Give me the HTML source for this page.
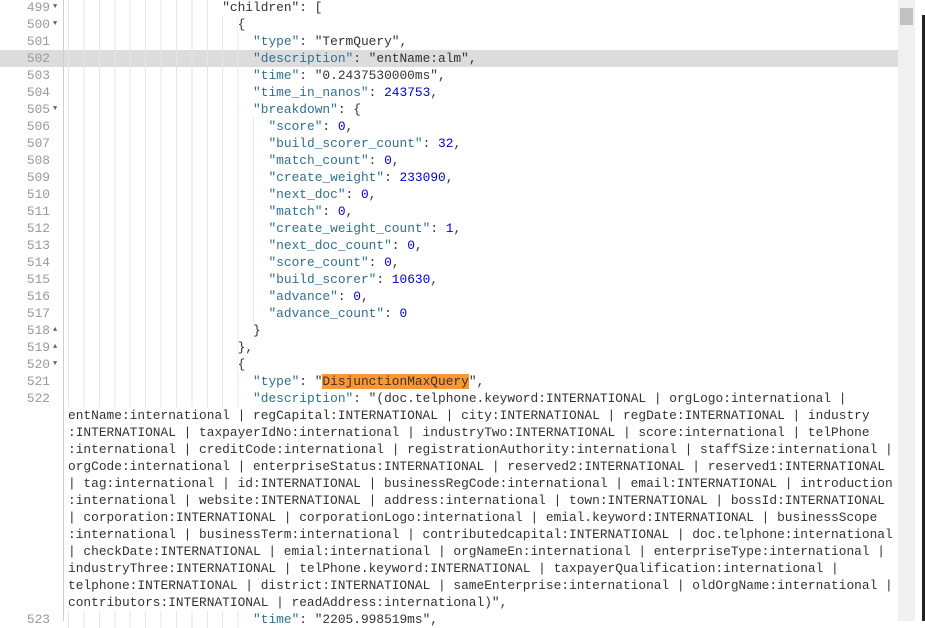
<!DOCTYPE html>
<html><head><meta charset="utf-8"><style>
body{margin:0;width:925px;height:621px;overflow:hidden;background:#fff;position:relative;font-family:"Liberation Mono",monospace;font-size:12.85px}
.r{position:absolute;left:68px;height:17px;line-height:17px;white-space:pre;color:#333}
.g{position:absolute;left:0;width:63px;height:17px;line-height:17px;color:#999;font-size:12.85px}
.g span{position:absolute;right:13px}
.g i{position:absolute;left:53px;top:0;font-style:normal;font-size:7px;color:#666}
.gd{position:absolute;left:68px;height:17px;background-image:repeating-linear-gradient(to right,#e6e6e6 0 1px,transparent 1px 15.42px)}
.k{color:#31708f}.n{color:#0000cd}
.hl{position:absolute;left:0;top:50px;width:898px;height:17px;background:#dcdcdd}
</style></head><body>
<div class="hl"></div>
<div style="position:absolute;left:63px;top:0;width:1px;height:621px;background:#d0d0d0"></div>
<div style="position:absolute;left:898px;top:0;width:17px;height:621px;background:#f0f0f0"></div>
<div style="position:absolute;left:900px;top:8px;width:13px;height:17px;background:#c1c1c1"></div>
<div style="position:absolute;left:922px;top:15px;width:3px;height:606px;background:#222"></div>
<div id="c"></div>
<script>
var L=[
[499,20,'"children": [','d'],
[500,22,'{','d'],
[501,24,'<k>"type"</k>: "TermQuery",'],
[502,24,'<k>"description"</k>: "entName:alm",'],
[503,24,'<k>"time"</k>: "0.2437530000ms",'],
[504,24,'<k>"time_in_nanos"</k>: <n>243753</n>,'],
[505,24,'<k>"breakdown"</k>: {','d'],
[506,26,'<k>"score"</k>: <n>0</n>,'],
[507,26,'<k>"build_scorer_count"</k>: <n>32</n>,'],
[508,26,'<k>"match_count"</k>: <n>0</n>,'],
[509,26,'<k>"create_weight"</k>: <n>233090</n>,'],
[510,26,'<k>"next_doc"</k>: <n>0</n>,'],
[511,26,'<k>"match"</k>: <n>0</n>,'],
[512,26,'<k>"create_weight_count"</k>: <n>1</n>,'],
[513,26,'<k>"next_doc_count"</k>: <n>0</n>,'],
[514,26,'<k>"score_count"</k>: <n>0</n>,'],
[515,26,'<k>"build_scorer"</k>: <n>10630</n>,'],
[516,26,'<k>"advance"</k>: <n>0</n>,'],
[517,26,'<k>"advance_count"</k>: <n>0</n>'],
[518,24,'}','u'],
[519,22,'},','u'],
[520,22,'{','d'],
[521,24,'<k>"type"</k>: "<span style="background:#ff9632">DisjunctionMaxQuery</span>",'],
[522,24,'<k>"description"</k>: "(doc.telphone.keyword:INTERNATIONAL | orgLogo:international |'],
[0,0,'entName:international | regCapital:INTERNATIONAL | city:INTERNATIONAL | regDate:INTERNATIONAL | industry'],
[0,0,':INTERNATIONAL | taxpayerIdNo:international | industryTwo:INTERNATIONAL | score:international | telPhone'],
[0,0,':international | creditCode:international | registrationAuthority:international | staffSize:international |'],
[0,0,'orgCode:international | enterpriseStatus:INTERNATIONAL | reserved2:INTERNATIONAL | reserved1:INTERNATIONAL'],
[0,0,'| tag:international | id:INTERNATIONAL | businessRegCode:international | email:INTERNATIONAL | introduction'],
[0,0,':international | website:INTERNATIONAL | address:international | town:INTERNATIONAL | bossId:INTERNATIONAL'],
[0,0,'| corporation:INTERNATIONAL | corporationLogo:international | emial.keyword:INTERNATIONAL | businessScope'],
[0,0,':international | businessTerm:international | contributedcapital:INTERNATIONAL | doc.telphone:international'],
[0,0,'| checkDate:INTERNATIONAL | emial:international | orgNameEn:international | enterpriseType:international |'],
[0,0,'industryThree:INTERNATIONAL | telPhone.keyword:INTERNATIONAL | taxpayerQualification:international |'],
[0,0,'telphone:INTERNATIONAL | district:INTERNATIONAL | sameEnterprise:international | oldOrgName:international |'],
[0,0,'contributors:INTERNATIONAL | readAddress:international)",'],
[523,24,'<k>"time"</k>: "2205.998519ms",']
];
var h='';
L.forEach(function(l,i){
 var t=-1+i*17, cw=7.71;
 if(l[0]){h+='<div class="g" style="top:'+t+'px"><span>'+l[0]+'</span>'+(l[3]?'<i>'+(l[3]=='d'?'&#9660;':'&#9650;')+'</i>':'')+'</div>';}
 if(l[1])h+='<div class="gd" style="top:'+t+'px;width:'+(l[1]*cw)+'px"></div>';
 var txt=l[2].replace(/<k>/g,'<span class="k">').replace(/<\/k>/g,'</span>').replace(/<n>/g,'<span class="n">').replace(/<\/n>/g,'</span>');
 h+='<div class="r" style="top:'+t+'px;left:'+(68+l[1]*cw)+'px">'+txt+'</div>';
});
document.getElementById('c').innerHTML=h;
</script>
</body></html>
